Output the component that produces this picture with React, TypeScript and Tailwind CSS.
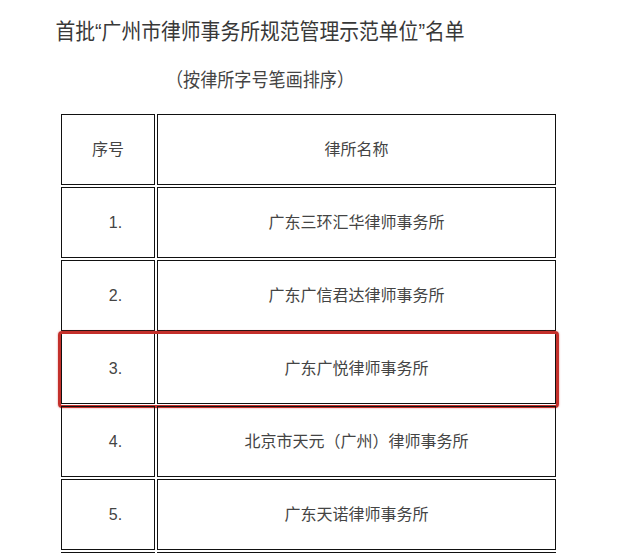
const firms = [
  "广东三环汇华律师事务所",
  "广东广信君达律师事务所",
  "广东广悦律师事务所",
  "北京市天元（广州）律师事务所",
  "广东天诺律师事务所",
];

export default function App() {
  return (
    <main
      className="h-[553px] w-[620px] overflow-hidden bg-white text-[#333]"
      style={{ fontFamily: '"Liberation Sans", "Noto Sans CJK SC", sans-serif' }}
    >
      <h1 className="w-[520px] scale-x-[0.9] pt-[18px] text-center text-[22px] font-normal leading-[28px] text-[#383838]">
        首批“广州市律师事务所规范管理示范单位”名单
      </h1>
      <p className="mt-[21px] w-[520px] scale-x-[0.9] text-center text-[19px] leading-[28px] text-[#444]">
        （按律所字号笔画排序）
      </p>

      <div className="ml-[61px] mt-[19px] flex w-fit flex-col gap-[2px] text-[16px] text-[#444]">
        <div className="flex gap-[2px]">
          <div className="flex h-[71px] w-[94px] items-center justify-center border border-[#111]">
            序号
          </div>
          <div className="flex h-[71px] w-[399px] items-center justify-center border border-[#111]">
            律所名称
          </div>
        </div>

        {firms.map((name, i) => (
          <div key={name} className="relative flex w-fit gap-[2px]">
            <div className="flex h-[71px] w-[94px] items-center justify-center border border-[#111] pl-[15px]">
              {i + 1}.
            </div>
            <div className="flex h-[71px] w-[399px] items-center justify-center border border-[#111]">
              {name}
            </div>
            {i === 2 && (
              <div className="absolute -bottom-[4px] -left-[3px] -right-[3px] -top-[2px] rounded-[4px] border-[3px] border-[#c4302b] shadow-[0_0_2px_rgba(196,48,43,0.6)]" />
            )}
          </div>
        ))}

        {/* next row, only its top edge is in view */}
        <div className="flex gap-[2px]">
          <div className="h-[71px] w-[94px] border border-[#111]" />
          <div className="h-[71px] w-[399px] border border-[#111]" />
        </div>
      </div>
    </main>
  );
}
